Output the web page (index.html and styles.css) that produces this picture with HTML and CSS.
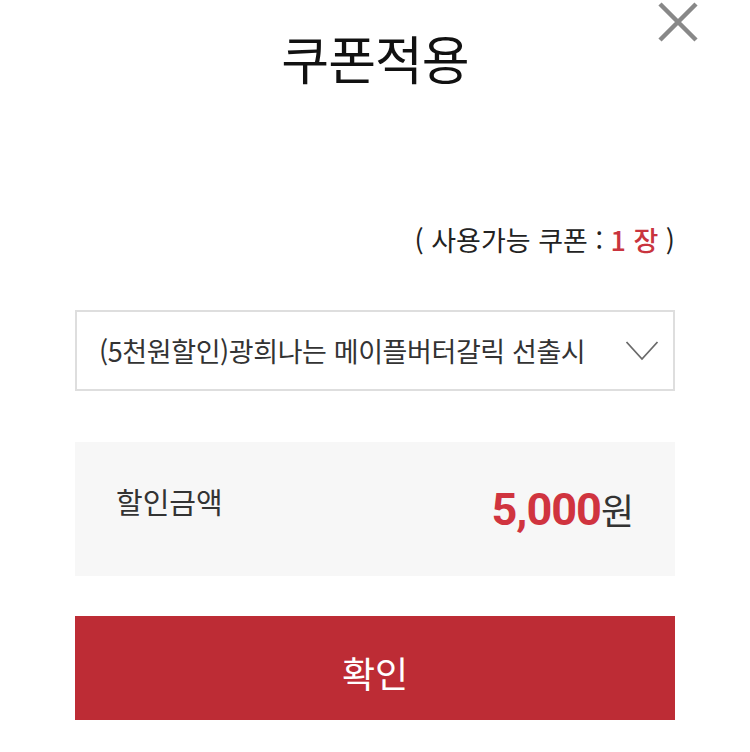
FILE: index.html
```html
<!DOCTYPE html>
<html lang="ko">
<head>
<meta charset="utf-8">
<link rel="stylesheet" href="styles.css">
</head>
<body>
<div class="sheet">
  <header class="head">
    <h1 class="title">쿠폰적용</h1>
    <button class="close" aria-label="닫기">
      <svg width="40" height="40" viewBox="0 0 40 40"><path d="M2 2 L38 38 M38 2 L2 38" stroke="#888" stroke-width="4.5" fill="none"/></svg>
    </button>
  </header>
  <div class="count">( 사용가능 쿠폰 : <span class="red">1 장</span> )</div>
  <div class="select">
    <span class="select-text">(5천원할인)광희나는 메이플버터갈릭 선출시 기념 할인쿠폰</span>
    <svg class="chev" width="34" height="22" viewBox="0 0 34 22"><path d="M1.5 2 L17 19 L32.5 2" stroke="#6a6a6a" stroke-width="1.8" fill="none"/></svg>
  </div>
  <div class="amount">
    <span class="amount-label">할인금액</span>
    <span class="amount-value"><b>5,000</b>원</span>
  </div>
  <button class="confirm">확인</button>
</div>
</body>
</html>
```
FILE: styles.css
```css
* { box-sizing: border-box; }
html, body { margin: 0; padding: 0; background: #fff; }
body { font-family: "Noto Sans CJK KR", "Noto Sans", sans-serif; color: #222; }
.sheet { width: 600px; margin-left: 75px; display: flex; flex-direction: column; }
.head { position: relative; height: 120px; display: flex; justify-content: center; }
.title { margin: 0; padding-top: 22px; font-size: 52px; font-weight: 400; line-height: 1.4; color: #111; letter-spacing: -1px; }
.close { position: absolute; right: -23px; top: 2px; background: none; border: 0; padding: 0; width: 40px; height: 40px; }
.count { margin-top: 102px; text-align: right; font-size: 27px; line-height: 36px; color: #222; letter-spacing: 0; }
.red { color: #c9343e; font-weight: 500; }
.select { margin-top: 52px; height: 81px; border: 2px solid #dedede; display: flex; align-items: center; padding: 0 14px 0 22px; gap: 36px; }
.select-text { flex: 1; overflow: hidden; white-space: nowrap; font-size: 27px; color: #333; letter-spacing: -0.4px; }
.chev { flex: none; }
.amount { margin-top: 51px; height: 134px; background: #f7f7f7; display: flex; align-items: center; justify-content: space-between; padding: 0 41px 0 41px; }
.amount-label { font-size: 29px; color: #333; margin-top: -16px; }
.amount-value { font-size: 36px; color: #333; }
.amount-value b { font-family: Roboto, sans-serif; font-weight: 700; font-size: 45px; color: #d0343f; letter-spacing: -1px; }
.confirm { margin-top: 40px; height: 104px; background: #bd2c35; color: #fff; border: 0; font-family: "Noto Sans CJK KR", sans-serif; font-size: 36px; padding: 8px 0 0; }
```
